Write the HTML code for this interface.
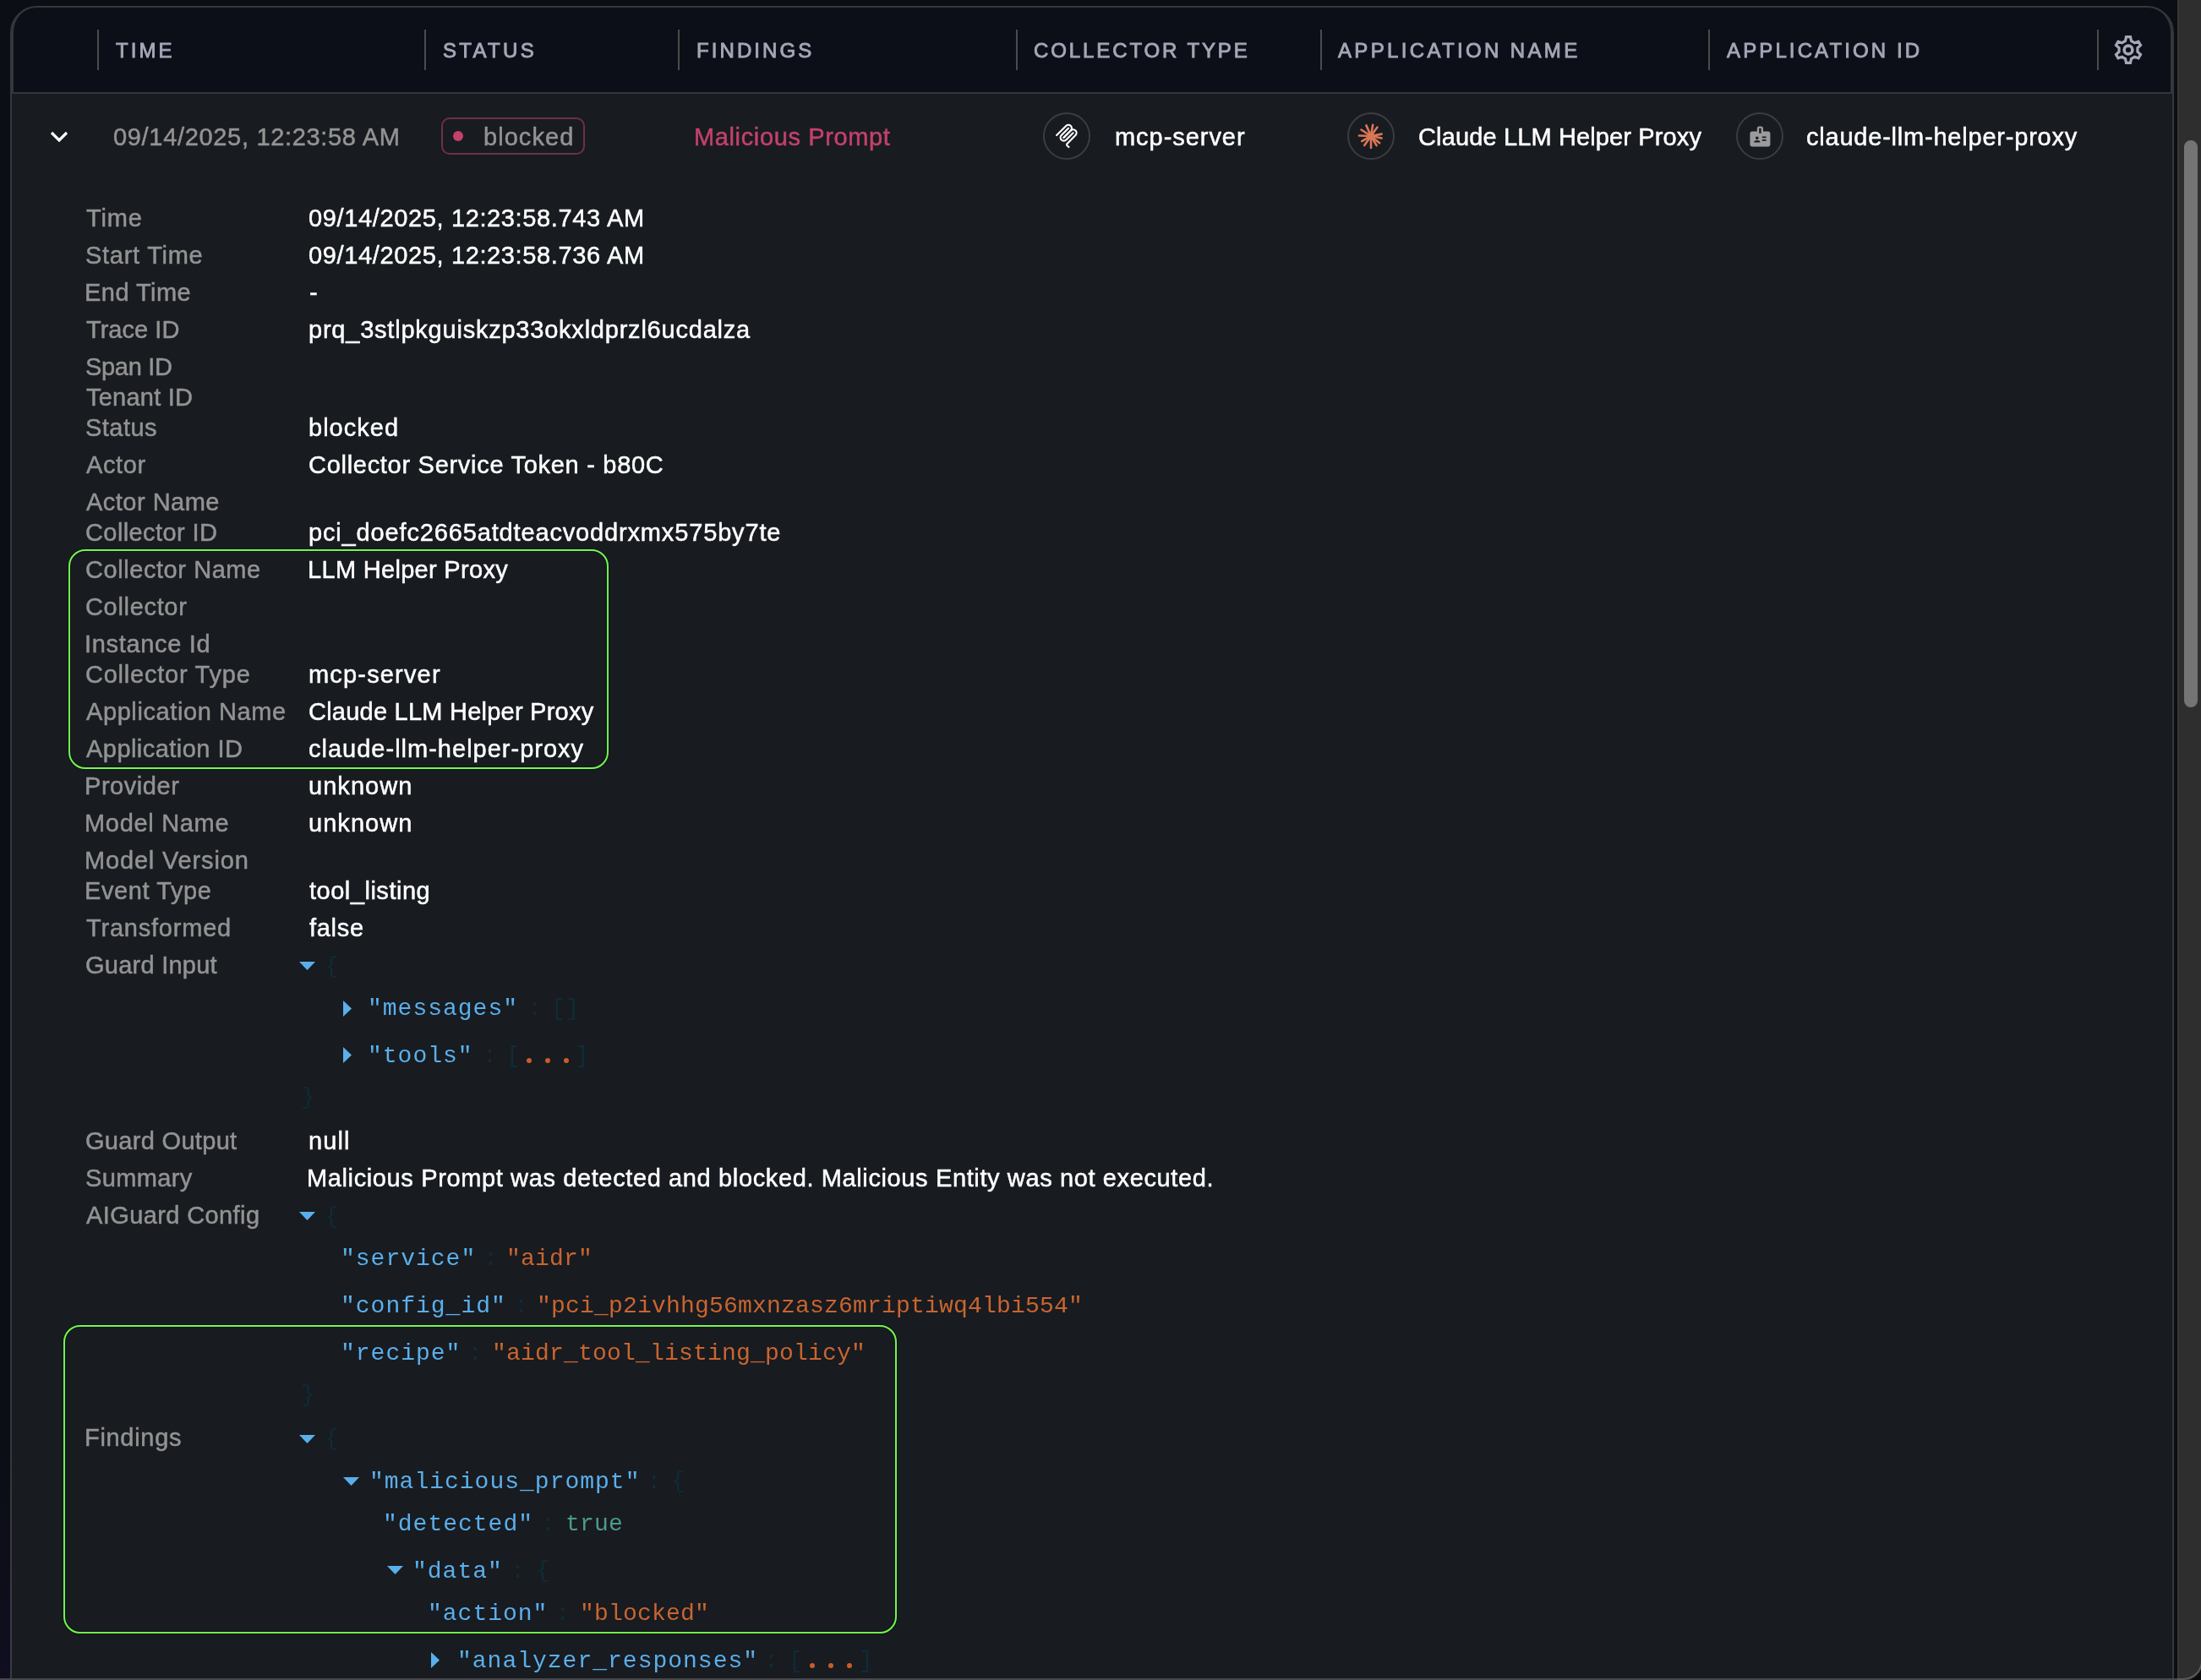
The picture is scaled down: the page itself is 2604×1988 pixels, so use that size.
<!DOCTYPE html>
<html><head><meta charset="utf-8"><title>Events</title><style>
html,body{margin:0;padding:0;width:2604px;height:1988px;overflow:hidden;background:#0b0e15;}
#root{position:relative;width:2604px;height:1988px;overflow:hidden;background:#0b0e15;}
.lstrip{position:absolute;left:0;top:1700px;width:12px;height:288px;background:linear-gradient(#0b0e15,#100e1f)}
.panel{position:absolute;left:12px;top:7px;width:2556px;height:2100px;border:2px solid #36373c;border-radius:32px 32px 0 0;background:#181b20;}
.pbl{position:absolute;left:12px;top:1700px;width:2px;height:288px;background:linear-gradient(#36373c,#3c3b49)}
.hdr{position:absolute;left:14px;top:9px;width:2552px;height:100px;background:#0c0f17;border-left:2px solid #36373c;border-right:2px solid #36373c;border-bottom:2px solid #36373c;border-radius:29px 29px 0 0;box-sizing:content-box;}
.dv{position:absolute;top:35px;width:2px;height:48px;background:#4b4b4c;}
.hd{position:absolute;will-change:transform;white-space:pre;font-family:"Liberation Sans",sans-serif;font-weight:normal;-webkit-text-stroke:0.9px currentColor;font-size:24px;line-height:24px;color:#a3a7b7;}
.t{position:absolute;will-change:transform;-webkit-text-stroke:0.5px currentColor;white-space:pre;font-family:"Liberation Sans",sans-serif;font-size:29px;line-height:29px;}
.lab{color:#939393} .val{color:#ffffff} .crim{color:#c3416a}
.m{position:absolute;will-change:transform;white-space:pre;font-family:"Liberation Mono",monospace;font-size:28px;line-height:28px;}
.key{color:#5aafeb;letter-spacing:1px} .str{color:#c9652f;letter-spacing:0.2px} .pun{color:#0f2b38} .boo{color:#4d9a8b;letter-spacing:0.2px}
.ic{position:absolute;overflow:visible}
.badge{position:absolute;left:522px;top:139px;width:166px;height:40px;border:2px solid #6f2f4a;border-radius:10px;}
.bdot{position:absolute;left:536px;top:155px;width:12px;height:12px;border-radius:50%;background:#c3416a;}
.circ{position:absolute;top:133px;width:52px;height:52px;border:2px solid #3c3d42;border-radius:50%;}
.dots{position:absolute;width:60px;height:10px}
.dots i{position:absolute;top:2.5px;width:6px;height:6px;border-radius:50%;background:#c65e2c}
.dots i:nth-child(1){left:1px} .dots i:nth-child(2){left:23px} .dots i:nth-child(3){left:45px}
.gbox{position:absolute;border:2px solid #71f94a;border-radius:20px;box-shadow:0 0 0 1px rgba(10,8,20,0.38), inset 0 0 0 1px rgba(10,8,20,0.38);}
.sbs{position:absolute;left:2572px;top:0;width:4px;height:1988px;background:#0b0e15}
.sbt{position:absolute;left:2576px;top:0;width:28px;height:1988px;background:#2e2e2e;border-left:2px solid #373734;box-sizing:border-box}
.corner{position:absolute;left:2560px;top:1940px;width:44px;height:48px;background:#0c0d10}
.thumb{position:absolute;left:2584px;top:166px;width:16px;height:671px;border-radius:8px;background:#747474}
.bline{position:absolute;left:0;top:1986px;width:2576px;height:2px;background:#46484c}
.bcorner{position:absolute;left:2560px;top:1944px;width:42px;height:42px;border-right:2px solid #5a5a5a;border-bottom:2px solid #5a5a5a;border-bottom-right-radius:22px}
</style></head>
<body><div id="root">
<div class="lstrip"></div>
<div class="panel"></div>
<div class="pbl"></div>
<div class="hdr"></div>
<div class="sbs"></div><div class="sbt"></div><div class="thumb"></div>

<svg class="ic" style="left:57px;top:151.5px" width="26" height="20" viewBox="0 0 26 20"><path d="M4 5L13 14L22 5" fill="none" stroke="#fff" stroke-width="3.2" stroke-linecap="butt"/></svg>
<div class="badge"></div><div class="bdot"></div>
<div class="circ" style="left:1234px"></div>
<div class="circ" style="left:1594px"></div>
<div class="circ" style="left:2054px"></div>
<svg class="ic" style="left:1246px;top:144px" width="32" height="32" viewBox="0 0 195 195"><g fill="none" stroke="#fff" stroke-width="13" stroke-linecap="round"><path d="M25 97.85L92.88 29.97C102.26 20.6 117.45 20.6 126.82 29.97C136.2 39.34 136.2 54.54 126.82 63.91L75.56 115.18"/><path d="M76.27 114.47L126.82 63.91C136.2 54.54 151.39 54.54 160.77 63.91L161.12 64.27C170.49 73.64 170.49 88.83 161.12 98.21L99.72 159.6C96.6 162.72 96.6 167.79 99.72 170.91L112.33 183.52"/><path d="M109.85 46.94L59.65 97.15C50.28 106.52 50.28 121.71 59.65 131.09C69.02 140.46 84.22 140.46 93.59 131.09L143.79 80.88"/></g></svg>
<svg class="ic" style="left:1606px;top:145px" width="32" height="32" viewBox="-16 -16 32 32"><g stroke="#d97757" stroke-width="2.6" stroke-linecap="round">
<line x1="0" y1="0" x2="0" y2="14"/><line x1="0" y1="0" x2="2.2" y2="-13.2"/><line x1="0" y1="0" x2="-5.6" y2="-12.6"/><line x1="0" y1="0" x2="7.5" y2="-10.5"/><line x1="0" y1="0" x2="-11.5" y2="-7.5"/><line x1="0" y1="0" x2="12.6" y2="-2.4"/><line x1="0" y1="0" x2="-14" y2="-0.5"/><line x1="0" y1="0" x2="12.6" y2="2.6"/><line x1="0" y1="0" x2="-10.8" y2="6.2"/><line x1="0" y1="0" x2="10.2" y2="8.2"/><line x1="0" y1="0" x2="-7.8" y2="11"/><line x1="0" y1="0" x2="6.6" y2="11.2"/>
</g><circle cx="0" cy="0" r="4.2" fill="#d97757"/></svg>
<svg class="ic" style="left:2067.6px;top:146.6px" width="28.8" height="28.8" viewBox="0 0 24 24"><path fill="#9b9b9b" d="M20 7h-5V4c0-1.1-.9-2-2-2h-2c-1.1 0-2 .9-2 2v3H4c-1.1 0-2 .9-2 2v11c0 1.1.9 2 2 2h16c1.1 0 2-.9 2-2V9c0-1.1-.9-2-2-2zM9 12c.83 0 1.5.67 1.5 1.5S9.830 15 9 15s-1.5-.67-1.5-1.5S8.17 12 9 12zm3 6H6v-.43c0-.6.36-1.150.92-1.39.64-.28 1.34-.43 2.08-.43s1.440.15 2.08.43c.55.24.92.78.92 1.39V18zm1-9h-2V4h2v5zm5 7.5h-4V15h4v1.5zm0-3h-4V12h4v1.5z"/></svg>
<svg class="ic" style="left:2498px;top:39px" width="40" height="40" viewBox="0 0 40 40"><path d="M16.50 9.40 L17.50 4.70 L22.50 4.70 L23.50 9.40 L27.43 11.67 L32.00 10.18 L34.50 14.52 L30.93 17.73 L30.93 22.27 L34.50 25.48 L32.00 29.82 L27.43 28.33 L23.50 30.60 L22.50 35.30 L17.50 35.30 L16.50 30.60 L12.57 28.33 L8.00 29.82 L5.50 25.48 L9.07 22.27 L9.07 17.73 L5.50 14.52 L8.00 10.18 L12.57 11.67Z" fill="none" stroke="#a4a8b8" stroke-width="3.2" stroke-linejoin="miter"/><circle cx="20" cy="20" r="4.9" fill="none" stroke="#a4a8b8" stroke-width="3.6"/></svg>

<div class="dv" style="left:115px"></div>
<div class="hd" style="left:137.00px;top:48px;letter-spacing:3.067px">TIME</div>
<div class="dv" style="left:502px"></div>
<div class="hd" style="left:524.30px;top:48px;letter-spacing:3.320px">STATUS</div>
<div class="dv" style="left:802px"></div>
<div class="hd" style="left:824.00px;top:48px;letter-spacing:3.086px">FINDINGS</div>
<div class="dv" style="left:1202px"></div>
<div class="hd" style="left:1223.40px;top:48px;letter-spacing:2.892px">COLLECTOR TYPE</div>
<div class="dv" style="left:1562px"></div>
<div class="hd" style="left:1583.00px;top:48px;letter-spacing:3.347px">APPLICATION NAME</div>
<div class="dv" style="left:2021px"></div>
<div class="hd" style="left:2042.50px;top:48px;letter-spacing:3.123px">APPLICATION ID</div>
<div class="dv" style="left:2481px"></div>
<div class="t lab" style="left:134.00px;top:148px;letter-spacing:0.677px">09/14/2025, 12:23:58 AM</div>
<div class="t crim" style="left:821.00px;top:148px;letter-spacing:0.630px">Malicious Prompt</div>
<div class="t lab" style="left:572.00px;top:148px;letter-spacing:1.050px">blocked</div>
<div class="t val" style="left:1318.60px;top:148px;letter-spacing:0.950px">mcp-server</div>
<div class="t val" style="left:1677.80px;top:148px;letter-spacing:0.132px">Claude LLM Helper Proxy</div>
<div class="t val" style="left:2137.40px;top:148px;letter-spacing:0.786px">claude-llm-helper-proxy</div>
<div class="t lab" style="left:102.00px;top:244px;letter-spacing:0.817px">Time</div>
<div class="t val" style="left:365.00px;top:244px;letter-spacing:0.635px">09/14/2025, 12:23:58.743 AM</div>
<div class="t lab" style="left:101.00px;top:288px;letter-spacing:0.728px">Start Time</div>
<div class="t val" style="left:365.00px;top:288px;letter-spacing:0.635px">09/14/2025, 12:23:58.736 AM</div>
<div class="t lab" style="left:100.00px;top:332px;letter-spacing:0.464px">End Time</div>
<div class="t val" style="left:366.00px;top:332px;letter-spacing:0.550px">-</div>
<div class="t lab" style="left:102.00px;top:376px;letter-spacing:0.036px">Trace ID</div>
<div class="t val" style="left:365.00px;top:376px;letter-spacing:0.779px">prq_3stlpkguiskzp33okxldprzl6ucdalza</div>
<div class="t lab" style="left:101.00px;top:420px;letter-spacing:-0.317px">Span ID</div>
<div class="t lab" style="left:102.00px;top:456px;letter-spacing:0.225px">Tenant ID</div>
<div class="t lab" style="left:101.00px;top:492px;letter-spacing:0.470px">Status</div>
<div class="t val" style="left:365.00px;top:492px;letter-spacing:1.017px">blocked</div>
<div class="t lab" style="left:102.00px;top:536px;letter-spacing:0.600px">Actor</div>
<div class="t val" style="left:365.00px;top:536px;letter-spacing:0.709px">Collector Service Token - b80C</div>
<div class="t lab" style="left:102.00px;top:580px;letter-spacing:0.483px">Actor Name</div>
<div class="t lab" style="left:101.00px;top:616px;letter-spacing:0.405px">Collector ID</div>
<div class="t val" style="left:365.00px;top:616px;letter-spacing:0.847px">pci_doefc2665atdteacvoddrxmx575by7te</div>
<div class="t lab" style="left:101.00px;top:660px;letter-spacing:0.565px">Collector Name</div>
<div class="t val" style="left:364.00px;top:660px;letter-spacing:0.310px">LLM Helper Proxy</div>
<div class="t lab" style="left:101.00px;top:704px;letter-spacing:0.675px">Collector</div>
<div class="t lab" style="left:100.00px;top:748px;letter-spacing:0.670px">Instance Id</div>
<div class="t lab" style="left:101.00px;top:784px;letter-spacing:0.765px">Collector Type</div>
<div class="t val" style="left:365.00px;top:784px;letter-spacing:1.172px">mcp-server</div>
<div class="t lab" style="left:102.00px;top:828px;letter-spacing:0.590px">Application Name</div>
<div class="t val" style="left:365.00px;top:828px;letter-spacing:0.232px">Claude LLM Helper Proxy</div>
<div class="t lab" style="left:102.00px;top:872px;letter-spacing:0.458px">Application ID</div>
<div class="t val" style="left:365.00px;top:872px;letter-spacing:1.005px">claude-llm-helper-proxy</div>
<div class="t lab" style="left:100.00px;top:916px;letter-spacing:0.550px">Provider</div>
<div class="t val" style="left:365.00px;top:916px;letter-spacing:1.050px">unknown</div>
<div class="t lab" style="left:100.00px;top:960px;letter-spacing:0.683px">Model Name</div>
<div class="t val" style="left:365.00px;top:960px;letter-spacing:1.050px">unknown</div>
<div class="t lab" style="left:100.00px;top:1004px;letter-spacing:0.833px">Model Version</div>
<div class="t lab" style="left:100.00px;top:1040px;letter-spacing:0.594px">Event Type</div>
<div class="t val" style="left:366.00px;top:1040px;letter-spacing:0.514px">tool_listing</div>
<div class="t lab" style="left:102.00px;top:1084px;letter-spacing:0.790px">Transformed</div>
<div class="t val" style="left:366.00px;top:1084px;letter-spacing:0.700px">false</div>
<div class="t lab" style="left:101.00px;top:1128px;letter-spacing:0.250px">Guard Input</div>
<div class="t lab" style="left:101.00px;top:1336px;letter-spacing:0.314px">Guard Output</div>
<div class="t val" style="left:365.00px;top:1336px;letter-spacing:1.083px">null</div>
<div class="t lab" style="left:101.00px;top:1380px;letter-spacing:0.350px">Summary</div>
<div class="t val" style="left:363.40px;top:1380px;letter-spacing:0.624px">Malicious Prompt was detected and blocked. Malicious Entity was not executed.</div>
<div class="t lab" style="left:102.00px;top:1424px;letter-spacing:0.396px">AIGuard Config</div>
<div class="t lab" style="left:100.00px;top:1687px;letter-spacing:0.693px">Findings</div>
<svg class="ic" style="left:354px;top:1138px" width="19" height="10" viewBox="0 0 19 10"><path d="M0 0H19L9.5 10Z" fill="#5aafeb"/></svg>
<div class="m pun" style="left:384px;top:1130px">{</div>
<svg class="ic" style="left:406px;top:1184px" width="10" height="19" viewBox="0 0 10 19"><path d="M0 0V19L10 9.5Z" fill="#5aafeb"/></svg>
<div class="m key" style="left:435px;top:1180px">&quot;messages&quot;</div>
<div class="m pun" style="left:624px;top:1180px">:</div>
<div class="m pun" style="left:652px;top:1180px">[]</div>
<svg class="ic" style="left:406px;top:1239px" width="10" height="19" viewBox="0 0 10 19"><path d="M0 0V19L10 9.5Z" fill="#5aafeb"/></svg>
<div class="m key" style="left:435px;top:1236px">&quot;tools&quot;</div>
<div class="m pun" style="left:571px;top:1236px">:</div>
<div class="m pun" style="left:598.5px;top:1236px">[</div>
<div class="dots" style="left:622px;top:1249px"><i></i><i></i><i></i></div>
<div class="m pun" style="left:680px;top:1236px">]</div>
<div class="m pun" style="left:356px;top:1285px">}</div>
<svg class="ic" style="left:354px;top:1434px" width="19" height="10" viewBox="0 0 19 10"><path d="M0 0H19L9.5 10Z" fill="#5aafeb"/></svg>
<div class="m pun" style="left:384px;top:1426px">{</div>
<div class="m key" style="left:402.5px;top:1476px">&quot;service&quot;</div>
<div class="m pun" style="left:572px;top:1476px">:</div>
<div class="m str" style="left:599px;top:1476px">&quot;aidr&quot;</div>
<div class="m key" style="left:402.5px;top:1532px">&quot;config_id&quot;</div>
<div class="m pun" style="left:608px;top:1532px">:</div>
<div class="m str" style="left:635px;top:1532px">&quot;pci_p2ivhhg56mxnzasz6mriptiwq4lbi554&quot;</div>
<div class="m key" style="left:402.5px;top:1588px">&quot;recipe&quot;</div>
<div class="m pun" style="left:554px;top:1588px">:</div>
<div class="m str" style="left:581.5px;top:1588px">&quot;aidr_tool_listing_policy&quot;</div>
<div class="m pun" style="left:356px;top:1637px">}</div>
<svg class="ic" style="left:354px;top:1698px" width="19" height="10" viewBox="0 0 19 10"><path d="M0 0H19L9.5 10Z" fill="#5aafeb"/></svg>
<div class="m pun" style="left:384px;top:1689px">{</div>
<svg class="ic" style="left:406px;top:1748px" width="19" height="10" viewBox="0 0 19 10"><path d="M0 0H19L9.5 10Z" fill="#5aafeb"/></svg>
<div class="m key" style="left:437px;top:1740px">&quot;malicious_prompt&quot;</div>
<div class="m pun" style="left:765px;top:1740px">:</div>
<div class="m pun" style="left:794px;top:1739px">{</div>
<div class="m key" style="left:453px;top:1790px">&quot;detected&quot;</div>
<div class="m pun" style="left:640px;top:1790px">:</div>
<div class="m boo" style="left:669px;top:1790px">true</div>
<svg class="ic" style="left:458px;top:1853px" width="19" height="10" viewBox="0 0 19 10"><path d="M0 0H19L9.5 10Z" fill="#5aafeb"/></svg>
<div class="m key" style="left:487.5px;top:1846px">&quot;data&quot;</div>
<div class="m pun" style="left:604px;top:1846px">:</div>
<div class="m pun" style="left:634px;top:1845px">{</div>
<div class="m key" style="left:505.5px;top:1896px">&quot;action&quot;</div>
<div class="m pun" style="left:657px;top:1896px">:</div>
<div class="m str" style="left:686px;top:1896px">&quot;blocked&quot;</div>
<svg class="ic" style="left:510px;top:1955px" width="10" height="19" viewBox="0 0 10 19"><path d="M0 0V19L10 9.5Z" fill="#5aafeb"/></svg>
<div class="m key" style="left:541px;top:1952px">&quot;analyzer_responses&quot;</div>
<div class="m pun" style="left:904px;top:1952px">:</div>
<div class="m pun" style="left:932.5px;top:1952px">[</div>
<div class="dots" style="left:957px;top:1965px"><i></i><i></i><i></i></div>
<div class="m pun" style="left:1016px;top:1952px">]</div>
<div class="gbox" style="left:81px;top:650px;width:635px;height:256px"></div>
<div class="gbox" style="left:75px;top:1568px;width:982px;height:361px"></div>
<div class="bline"></div>
<svg class="ic" style="left:2560px;top:1940px" width="44" height="48" viewBox="2560 1940 44 48"><path d="M2583 1989 A23 23 0 0 0 2606 1965 V1989 Z" fill="#0b0b0d"/><path d="M2576 1987 H2583 A22 22 0 0 0 2605 1965" fill="none" stroke="#5a5a5a" stroke-width="2"/></svg>
</div></body></html>
